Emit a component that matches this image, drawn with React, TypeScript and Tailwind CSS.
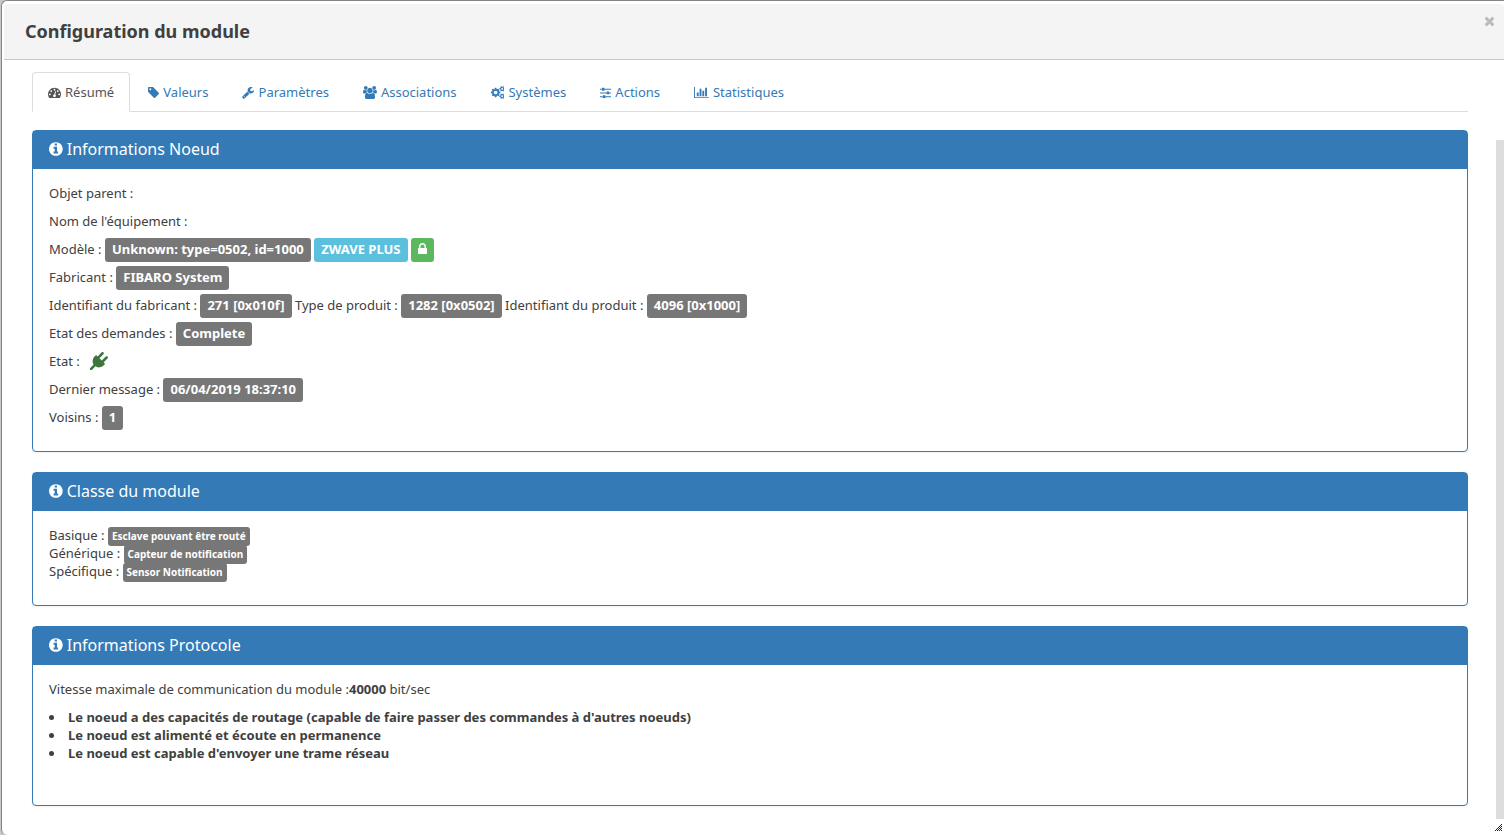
import React from "react";
import clsx from "clsx";

// [viewBox x, viewBox width, path]
const ICONS = {
  dashboard: [
    0,
    1792,
    "M384 1152q0-53-37.5-90.5t-90.5-37.5-90.5 37.5-37.5 90.5 37.5 90.5 90.5 37.5 90.5-37.5 37.5-90.5zm192-448q0-53-37.5-90.5t-90.5-37.5-90.5 37.5-37.5 90.5 37.5 90.5 90.5 37.5 90.5-37.5 37.5-90.5zm428 481l101-382q6-26-7.5-48.5t-38.5-29.5-48 6.5-30 39.5l-101 382q-60 5-107 43.5t-63 98.5q-20 77 20 146t117 89 146-20 89-117q16-60-6-117t-72-91zm660-33q0-53-37.5-90.5t-90.5-37.5-90.5 37.5-37.5 90.5 37.5 90.5 90.5 37.5 90.5-37.5 37.5-90.5zm-640-640q0-53-37.5-90.5t-90.5-37.5-90.5 37.5-37.5 90.5 37.5 90.5 90.5 37.5 90.5-37.5 37.5-90.5zm448 192q0-53-37.5-90.5t-90.5-37.5-90.5 37.5-37.5 90.5 37.5 90.5 90.5 37.5 90.5-37.5 37.5-90.5zm320 448q0 261-141 483-19 29-54 29h-1402q-35 0-54-29-141-221-141-483 0-182 71-348t191-286 286-191 348-71 348 71 286 191 191 286 71 348z",
  ],
  tag: [
    128,
    1536,
    "M576 448q0-53-37.5-90.5t-90.5-37.5-90.5 37.5-37.5 90.5 37.5 90.5 90.5 37.5 90.5-37.5 37.5-90.5zm1067 576q0 53-37 90l-491 492q-39 37-91 37-53 0-90-37l-715-716q-38-37-64.5-101t-26.5-117v-416q0-52 38-90t90-38h416q53 0 117 26.5t102 64.5l715 714q37 39 37 91z",
  ],
  wrench: [
    64,
    1664,
    "M448 1472q0-26-19-45t-45-19-45 19-19 45 19 45 45 19 45-19 19-45zm644-420l-682 682q-37 37-90 37-52 0-91-37l-106-108q-38-36-38-90 0-53 38-91l681-681q39 98 114.5 173.5t173.5 114.5zm634-435q0 39-23 106-47 134-164.5 217.5t-258.5 83.5q-185 0-316.5-131.5t-131.5-316.5 131.5-316.5 316.5-131.5q58 0 121.5 16.5t107.5 46.5q16 11 16 28t-16 28l-293 169v224l193 107q5-3 79-48.5t135.5-81 70.5-35.5q15 0 23.5 10t8.5 25z",
  ],
  users: [
    0,
    1920,
    "M593 896q-162 5-265 128h-134q-82 0-138-40.5t-56-118.5q0-353 124-353 6 0 43.5 21t97.5 42.5 119 21.5q67 0 133-23-5 37-5 66 0 139 81 256zm1071 637q0 120-73 189.5t-194 69.5h-874q-121 0-194-69.5t-73-189.5q0-53 3.5-103.5t14-109 26.5-108.5 43-97.5 62-81 85.5-53.5 111.5-20q10 0 43 21.5t73 48 107 48 135 21.5 135-21.5 107-48 73-48 43-21.5q61 0 111.5 20t85.5 53.5 62 81 43 97.5 26.5 108.5 14 109 3.5 103.5zm-1024-1277q0 106-75 181t-181 75-181-75-75-181 75-181 181-75 181 75 75 181zm704 384q0 159-112.5 271.5t-271.5 112.5-271.5-112.5-112.5-271.5 112.5-271.5 271.5-112.5 271.5 112.5 112.5 271.5zm576 225q0 78-56 118.5t-138 40.5h-134q-103-123-265-128 81-117 81-256 0-29-5-66 66 23 133 23 59 0 119-21.5t97.5-42.5 43.5-21q124 0 124 353zm-128-609q0 106-75 181t-181 75-181-75-75-181 75-181 181-75 181 75 75 181z",
  ],
  cogs: [
    0,
    1920,
    "M896 896q0-106-75-181t-181-75-181 75-75 181 75 181 181 75 181-75 75-181zm768 512q0-52-38-90t-90-38-90 38-38 90q0 53 37.5 90.5t90.5 37.5 90.5-37.5 37.5-90.5zm0-1024q0-52-38-90t-90-38-90 38-38 90q0 53 37.5 90.5t90.5 37.5 90.5-37.5 37.5-90.5zm-384 421v185q0 10-7 19.5t-16 10.5l-155 24q-11 35-32 76 34 48 90 115 7 11 7 20 0 12-7 19-23 30-82.5 89.5t-78.5 59.5q-11 0-21-7l-115-90q-37 19-77 31-11 108-23 155-7 24-30 24h-186q-11 0-20-7.5t-10-17.5l-23-153q-34-10-75-31l-118 89q-7 7-20 7-11 0-21-8-144-133-144-160 0-9 7-19 10-14 41-53t47-61q-23-44-35-82l-152-24q-10-1-17-9.5t-7-19.5v-185q0-10 7-19.5t16-10.5l155-24q11-35 32-76-34-48-90-115-7-11-7-20 0-12 7-20 22-30 82-89t79-59q11 0 21 7l115 90q34-18 77-32 11-108 23-154 7-24 30-24h186q11 0 20 7.5t10 17.5l23 153q34 10 75 31l118-89q8-7 20-7 11 0 21 8 144 133 144 160 0 8-7 19-12 16-42 54t-45 60q23 48 34 82l152 23q10 2 17 10.5t7 19.5zm640 533v140q0 16-149 31-12 27-30 52 51 113 51 138 0 4-4 7-122 71-124 71-8 0-46-47t-52-68q-20 2-30 2t-30-2q-14 21-52 68t-46 47q-2 0-124-71-4-3-4-7 0-25 51-138-18-25-30-52-149-15-149-31v-140q0-16 149-31 13-29 30-52-51-113-51-138 0-4 4-7 4-2 35-20t59-34 30-16q8 0 46 46.5t52 67.5q20-2 30-2t30 2q51-71 92-112l6-2q4 0 124 70 4 3 4 7 0 25-51 138 17 23 30 52 149 15 149 31zm0-1024v140q0 16-149 31-12 27-30 52 51 113 51 138 0 4-4 7-122 71-124 71-8 0-46-47t-52-68q-20 2-30 2t-30-2q-14 21-52 68t-46 47q-2 0-124-71-4-3-4-7 0-25 51-138-18-25-30-52-149-15-149-31v-140q0-16 149-31 13-29 30-52-51-113-51-138 0-4 4-7 4-2 35-20t59-34 30-16q8 0 46 46.5t52 67.5q20-2 30-2t30 2q51-71 92-112l6-2q4 0 124 70 4 3 4 7 0 25-51 138 17 23 30 52 149 15 149 31z",
  ],
  sliders: [
    0,
    1536,
    "M352 1408v128h-352v-128h352zm352-128q26 0 45 19t19 45v256q0 26-19 45t-45 19h-256q-26 0-45-19t-19-45v-256q0-26 19-45t45-19h256zm160-384v128h-864v-128h864zm-640-512v128h-224v-128h224zm1312 1024v128h-736v-128h736zm-960-1152q26 0 45 19t19 45v256q0 26-19 45t-45 19h-256q-26 0-45-19t-19-45v-256q0-26 19-45t45-19h256zm640 512q26 0 45 19t19 45v256q0 26-19 45t-45 19h-256q-26 0-45-19t-19-45v-256q0-26 19-45t45-19h256zm320 128v128h-224v-128h224zm0-512v128h-864v-128h864z",
  ],
  chart: [
    0,
    2048,
    "M640 896v512h-256v-512h256zm384-512v1024h-256v-1024h256zm1024 1152v128h-2048v-1536h128v1408h1920zm-640-896v768h-256v-768h256zm384-384v1152h-256v-1152h256z",
  ],
  info: [
    128,
    1536,
    "M1152 1376v-160q0-14-9-23t-23-9h-96v-512q0-14-9-23t-23-9h-320q-14 0-23 9t-9 23v160q0 14 9 23t23 9h96v320h-96q-14 0-23 9t-9 23v160q0 14 9 23t23 9h448q14 0 23-9t9-23zm-128-896v-160q0-14-9-23t-23-9h-192q-14 0-23 9t-9 23v160q0 14 9 23t23 9h192q14 0 23-9t9-23zm640 416q0 209-103 385.5t-279.5 279.5-385.5 103-385.5-103-279.5-279.5-103-385.5 103-385.5 279.5-279.5 385.5-103 385.5 103 279.5 279.5 103 385.5z",
  ],
  lock: [
    320,
    1152,
    "M640 768h512v-192q0-106-75-181t-181-75-181 75-75 181v192zm832 96v576q0 40-28 68t-68 28h-960q-40 0-68-28t-28-68v-576q0-40 28-68t68-28h32v-192q0-184 132-316t316-132 316 132 132 316v192h32q40 0 68 28t28 68z",
  ],
  plug: [
    0,
    1792,
    "M1755 453q37 38 37 90.5t-37 90.5l-401 400 150 150-160 160q-163 163-389.5 186.5t-411.5-100.5l-362 362h-181v-181l362-362q-124-185-100.5-411.5t186.5-389.5l160-160 150 150 400-401q38-37 91-37t90 37 37 90.5-37 90.5l-400 401 234 234 401-400q38-37 91-37t90 37z",
  ],
  times: [
    192,
    1408,
    "M1490 1322q0 40-28 68l-136 136q-28 28-68 28t-68-28l-294-294-294 294q-28 28-68 28t-68-28l-136-136q-28-28-28-68t28-68l294-294-294-294q-28-28-28-68t28-68l136-136q28-28 68-28t68 28l294 294 294-294q28-28 68-28t68 28l136 136q28 28 28 68t-28 68l-294 294 294 294q28 28 28 68z",
  ],
} as const;

type IconName = keyof typeof ICONS;

function Icon({ name, className = "h-[13px]" }: { name: IconName; className?: string }) {
  const [x, width, path] = ICONS[name];
  return (
    <svg
      viewBox={`${x} 0 ${width} 1792`}
      fill="currentColor"
      aria-hidden="true"
      className={clsx("inline-block w-auto shrink-0", className)}
    >
      <path d={path} />
    </svg>
  );
}

const tabs: { label: string; icon: IconName }[] = [
  { label: "Résumé", icon: "dashboard" },
  { label: "Valeurs", icon: "tag" },
  { label: "Paramètres", icon: "wrench" },
  { label: "Associations", icon: "users" },
  { label: "Systèmes", icon: "cogs" },
  { label: "Actions", icon: "sliders" },
  { label: "Statistiques", icon: "chart" },
];

const classes = [
  { label: "Basique :", value: "Esclave pouvant être routé" },
  { label: "Générique :", value: "Capteur de notification" },
  { label: "Spécifique :", value: "Sensor Notification" },
];

const capabilities = [
  "Le noeud a des capacités de routage (capable de faire passer des commandes à d'autres noeuds)",
  "Le noeud est alimenté et écoute en permanence",
  "Le noeud est capable d'envoyer une trame réseau",
];

function Label({ color = "bg-[#777777]", children }: { color?: string; children: React.ReactNode }) {
  return (
    <span className={clsx("rounded-[3px] px-[7px] pt-[2px] pb-1 font-bold text-white", color)}>
      {children}
    </span>
  );
}

function Panel({ title, children }: { title: string; children: React.ReactNode }) {
  return (
    <section className="mb-5 rounded-sm border border-[#337ab7] bg-white shadow-xs">
      <h3 className="flex items-center gap-1 bg-[#337ab7] px-4 pt-[9px] pb-[11px] text-base leading-[18px] text-white">
        <Icon name="info" className="h-4" />
        {title}
      </h3>
      <div className="px-4 py-[15px]">{children}</div>
    </section>
  );
}

export default function App() {
  return (
    <div className="min-h-screen bg-[#c8c8c8] pl-px font-['Noto_Sans',sans-serif] text-[13px] leading-[18px] text-[#404040]">
      <div className="relative flex min-h-screen flex-col rounded-l-md border-t border-l border-[#858585] bg-white pt-[3px] pl-[2px]">
        <header className="flex items-start justify-between rounded-t-sm border-b border-[#c8c8c8] bg-[#f4f4f4] pr-[9px] pl-[21px]">
          <h2 className="py-[15px] text-lg leading-[25px] font-bold">Configuration du module</h2>
          <button type="button" aria-label="Fermer" className="mt-[10px] flex text-[#bbbbbb]">
            <Icon name="times" className="h-[14px]" />
          </button>
        </header>

        <div className="flex flex-1">
          <main className="min-w-0 flex-1 px-7 pt-3">
            <nav className="mb-[18px] flex flex-wrap gap-[2px] border-b border-[#dddddd]">
              {tabs.map((tab, i) => (
                <a
                  key={tab.label}
                  href="#"
                  className={clsx(
                    "-mb-px flex items-center gap-1 rounded-t-sm border px-[15px] py-[10px]",
                    i === 0
                      ? "border-[#dddddd] border-b-white bg-white text-[#555555]"
                      : "border-transparent text-[#337ab7]"
                  )}
                >
                  <Icon name={tab.icon} />
                  {tab.label}
                </a>
              ))}
            </nav>

            <Panel title="Informations Noeud">
              <div className="flex flex-col gap-[10px] pb-[10px]">
                <p>Objet parent :</p>
                <p>Nom de l'équipement :</p>
                <p>
                  Modèle : <Label>Unknown: type=0502, id=1000</Label>{" "}
                  <Label color="bg-[#5bc0de]">ZWAVE PLUS</Label>{" "}
                  <Label color="bg-[#5cb85c]">
                    <Icon name="lock" className="h-[14px] align-[-2px]" />
                  </Label>
                </p>
                <p>
                  Fabricant : <Label>FIBARO System</Label>
                </p>
                <p>
                  Identifiant du fabricant : <Label>271 [0x010f]</Label> Type de produit :{" "}
                  <Label>1282 [0x0502]</Label> Identifiant du produit :{" "}
                  <Label>4096 [0x1000]</Label>
                </p>
                <p>
                  Etat des demandes : <Label>Complete</Label>
                </p>
                <p className="flex items-center gap-[10px]">
                  Etat : <Icon name="plug" className="h-[18px] text-[#3c763d]" />
                </p>
                <p>
                  Dernier message : <Label>06/04/2019 18:37:10</Label>
                </p>
                <p>
                  Voisins : <Label>1</Label>
                </p>
              </div>
            </Panel>

            <Panel title="Classe du module">
              <div className="pb-[10px]">
                {classes.map((item) => (
                  <p key={item.label}>
                    {item.label}{" "}
                    <span className="rounded-[3px] bg-[#777777] px-1 pt-[2px] pb-[3px] text-[10px] leading-none font-bold text-white">
                      {item.value}
                    </span>
                  </p>
                ))}
              </div>
            </Panel>

            <Panel title="Informations Protocole">
              <p>
                Vitesse maximale de communication du module :<b>40000</b> bit/sec
              </p>
              <ul className="mt-[10px] mb-7 list-inside list-disc font-bold">
                {capabilities.map((text) => (
                  <li key={text}>{text}</li>
                ))}
              </ul>
            </Panel>
          </main>

          {/* Scroll track */}
          <div className="flex w-2 flex-col pt-20 pb-4">
            <div className="flex-1 bg-[#dddddd]" />
          </div>
        </div>

        {/* Resize grip */}
        <svg
          viewBox="0 0 8 8"
          aria-hidden="true"
          className="absolute right-[1px] bottom-1 h-2 w-2 text-[#222222]"
        >
          <path
            d="M6 1h1v1h-1zM5 2h1v1h-1zM4 3h1v1h-1zM6 3h1v1h-1zM3 4h1v1h-1zM5 4h1v1h-1zM2 5h1v1h-1zM4 5h1v1h-1zM6 5h1v1h-1zM1 6h1v1h-1zM3 6h1v1h-1zM5 6h1v1h-1zM0 7h1v1h-1zM2 7h1v1h-1zM4 7h1v1h-1zM6 7h1v1h-1z"
            fill="currentColor"
          />
        </svg>
      </div>
    </div>
  );
}
